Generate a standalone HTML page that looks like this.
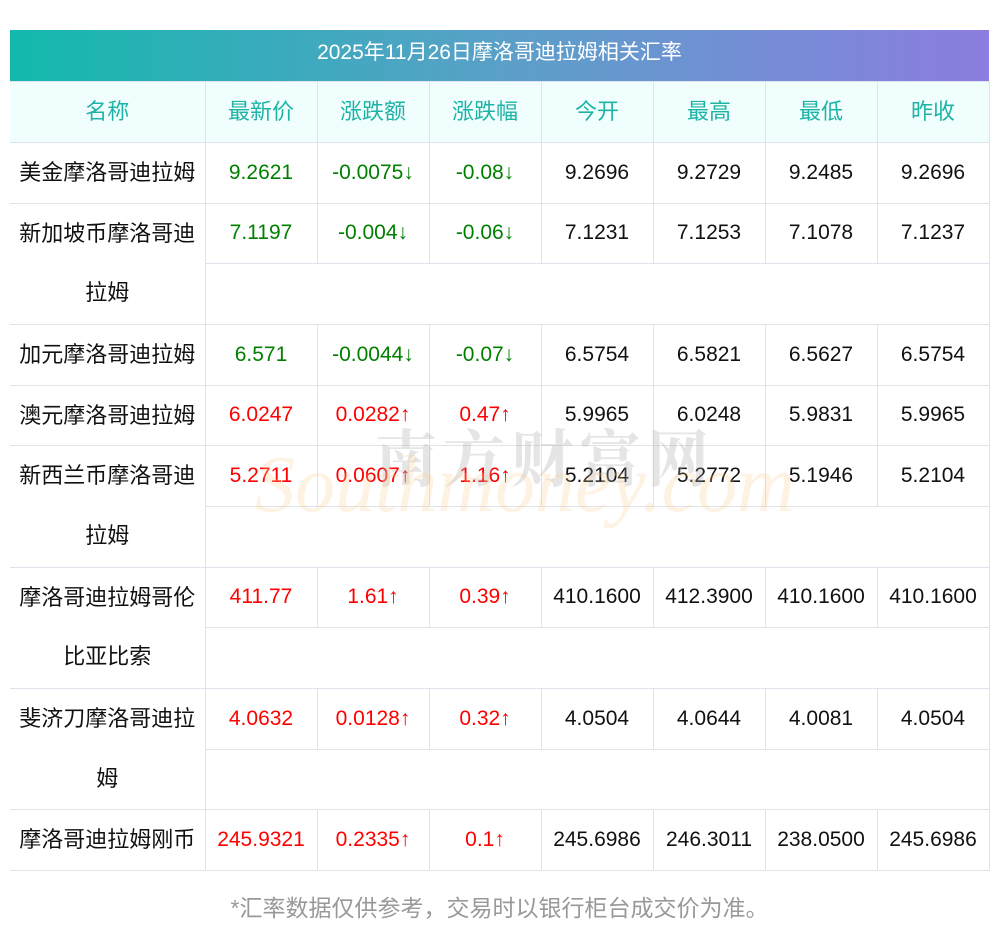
<!DOCTYPE html>
<html><head><meta charset="utf-8"><style>
body{margin:0;background:#fff;font-family:"Liberation Sans","Noto Sans CJK SC",sans-serif;}
.wrap{position:absolute;left:10px;top:30px;width:979px;}
.title{height:51px;line-height:46px;text-align:center;color:#fff;font-size:21px;background:linear-gradient(90deg,#13b9ad,#5aa0c8 50%,#8c7de0);}
table{border-collapse:collapse;width:979px;table-layout:fixed;}
td{height:60.67px;padding:0;text-align:center;font-size:21px;color:#111;border:1px solid #dfe3ec;box-sizing:border-box;line-height:24px;}
tr.h td{background:#f0fffe;color:#1fb3a7;height:61px;font-size:22px;}
td.n{border-left:none;line-height:59.6px;vertical-align:top;font-size:22px;}
tr td:last-child{border-right:1px solid #dfe3ec;}
tr.h td:first-child{border-left:none;}
td.b{border-right:none;border-top:1px solid #dfe3ec;}
.g{color:#008000}.r{color:#ff0000}
.foot{position:absolute;top:889px;left:0;width:979px;text-align:center;color:#999;font-size:23px;}
.wm1{position:absolute;left:375px;top:410px;font-size:62px;color:rgba(170,170,170,.3);letter-spacing:6px;font-weight:bold;font-family:"Noto Serif CJK SC",serif;}
.wm2{position:absolute;left:255px;top:440px;font-size:80px;font-style:italic;color:rgba(253,205,140,.25);font-family:"Liberation Serif",serif;}
</style></head><body>
<div class="wrap">
<div class="title">2025年11月26日摩洛哥迪拉姆相关汇率</div>
<table>
<colgroup><col style="width:195px"><col style="width:112px"><col style="width:112px"><col style="width:112px"><col style="width:112px"><col style="width:112px"><col style="width:112px"><col style="width:112px"></colgroup>
<tr class="h"><td>名称</td><td>最新价</td><td>涨跌额</td><td>涨跌幅</td><td>今开</td><td>最高</td><td>最低</td><td>昨收</td></tr>
<tr><td class="n">美金摩洛哥迪拉姆</td><td class="g">9.2621</td><td class="g">-0.0075↓</td><td class="g">-0.08↓</td><td>9.2696</td><td>9.2729</td><td>9.2485</td><td>9.2696</td></tr>
<tr><td class="n" rowspan="2">新加坡币摩洛哥迪<br>拉姆</td><td class="g">7.1197</td><td class="g">-0.004↓</td><td class="g">-0.06↓</td><td>7.1231</td><td>7.1253</td><td>7.1078</td><td>7.1237</td></tr>
<tr><td class="b" colspan="7"></td></tr>
<tr><td class="n">加元摩洛哥迪拉姆</td><td class="g">6.571</td><td class="g">-0.0044↓</td><td class="g">-0.07↓</td><td>6.5754</td><td>6.5821</td><td>6.5627</td><td>6.5754</td></tr>
<tr><td class="n">澳元摩洛哥迪拉姆</td><td class="r">6.0247</td><td class="r">0.0282↑</td><td class="r">0.47↑</td><td>5.9965</td><td>6.0248</td><td>5.9831</td><td>5.9965</td></tr>
<tr><td class="n" rowspan="2">新西兰币摩洛哥迪<br>拉姆</td><td class="r">5.2711</td><td class="r">0.0607↑</td><td class="r">1.16↑</td><td>5.2104</td><td>5.2772</td><td>5.1946</td><td>5.2104</td></tr>
<tr><td class="b" colspan="7"></td></tr>
<tr><td class="n" rowspan="2">摩洛哥迪拉姆哥伦<br>比亚比索</td><td class="r">411.77</td><td class="r">1.61↑</td><td class="r">0.39↑</td><td>410.1600</td><td>412.3900</td><td>410.1600</td><td>410.1600</td></tr>
<tr><td class="b" colspan="7"></td></tr>
<tr><td class="n" rowspan="2">斐济刀摩洛哥迪拉<br>姆</td><td class="r">4.0632</td><td class="r">0.0128↑</td><td class="r">0.32↑</td><td>4.0504</td><td>4.0644</td><td>4.0081</td><td>4.0504</td></tr>
<tr><td class="b" colspan="7"></td></tr>
<tr><td class="n">摩洛哥迪拉姆刚币</td><td class="r">245.9321</td><td class="r">0.2335↑</td><td class="r">0.1↑</td><td>245.6986</td><td>246.3011</td><td>238.0500</td><td>245.6986</td></tr>
</table>
</div>
<div class="wm1">南方财富网</div>
<div class="wm2">Southmoney.com</div>
<div class="foot" style="left:10px">*汇率数据仅供参考，交易时以银行柜台成交价为准。</div>
</body></html>
